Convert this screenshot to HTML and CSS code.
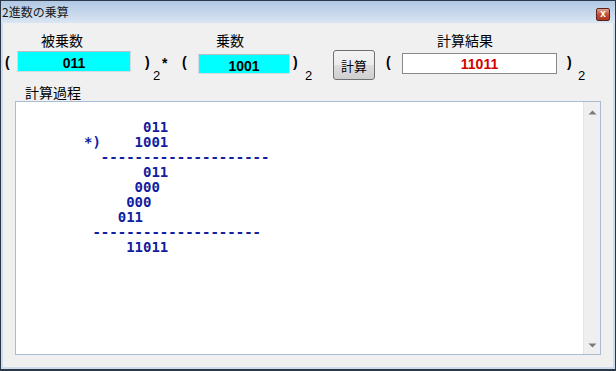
FILE: index.html
```html
<!DOCTYPE html>
<html lang="ja">
<head>
<meta charset="UTF-8">
<title>2進数の乗算</title>
<link rel="stylesheet" href="styles.css">
</head>
<body>
<div class="window">
    <div class="titlebar">
        <span class="title">2進数の乗算</span>
        <span class="close">x</span>
    </div>
    <div class="client">
        <div class="labels">
            <span class="label l1">被乗数</span>
            <span class="label l2">乗数</span>
            <span class="label l3">計算結果</span>
        </div>
        <div class="operands">
            <span class="paren">(</span>
            <div class="field cyan f1">011</div>
            <span class="paren">)</span>
            <span class="sub">2</span>
            <span class="times">*</span>
            <span class="paren">(</span>
            <div class="field cyan f2">1001</div>
            <span class="paren">)</span>
            <span class="sub">2</span>
            <button class="calc">計算</button>
            <span class="paren">(</span>
            <div class="field result">11011</div>
            <span class="paren">)</span>
            <span class="sub">2</span>
        </div>
        <div class="caption">計算過程</div>
        <div class="process">
<pre class="work">       011
*)    1001
  --------------------
       011
      000
     000
    011
 --------------------
     11011</pre>
            <div class="scrollbar">
                <svg width="9" height="5" viewBox="0 0 9 5"><polygon points="0.5,4.5 4.5,0.5 8.5,4.5" fill="#7a7a7a"/></svg>
                <svg width="9" height="5" viewBox="0 0 9 5"><polygon points="0.5,0.5 8.5,0.5 4.5,4.5" fill="#7a7a7a"/></svg>
            </div>
        </div>
    </div>
</div>
</body>
</html>
```
FILE: styles.css
```css
body, html {
    margin:0; padding:0;
    font-family:"Noto Sans CJK JP", sans-serif;
}
.window {
    width:616px; height:371px; box-sizing:border-box;
    border:1px solid #2b3848; border-bottom-width:2px;
    background:#cddcec;
    display:flex; flex-direction:column;
}
.titlebar {
    height:22px; flex:none;
    display:flex; justify-content:space-between; align-items:flex-start;
    padding:0 5px 0 1px;
    background:linear-gradient(#b1c8e3, #d9e5f2);
}
.title {
    font-size:12px; line-height:22px; color:#1a1a1a;
}
.close {
    width:14px; height:13px; box-sizing:border-box; margin-top:7px;
    border:1px solid #5b2418; border-radius:2px;
    background:linear-gradient(#e2a090, #c4503a 50%, #b0341f);
    color:#fff; font:bold 10px/10px "Liberation Sans", sans-serif; text-align:center;
}
.client {
    flex:1; margin:0 2px 2px; background:#f0f0f0;
}
.labels {
    display:flex; margin-top:9px; height:16px;
    font-size:14px; line-height:16px; color:#000;
}
.l1 { margin-left:38px; }
.l2 { margin-left:133px; }
.l3 { margin-left:193px; }

.operands {
    display:grid; margin-top:2px; height:30px; padding-left:2px;
    grid-template-columns:12px 128px 8px 9px 20px 16px 95px 12px 28px 53px 16px 165px 11px 1fr;
    align-items:start;
    font-family:"Liberation Sans", sans-serif;
}
.paren {
    margin-top:4px; font-size:14px; font-weight:bold; line-height:16px;
}
.times {
    margin-top:5px; font-size:14px; font-weight:bold; line-height:16px;
}
.sub {
    margin-top:18px; font-size:13px; line-height:16px;
}
.field {
    box-sizing:border-box; padding-top:3px; line-height:16px;
    font-size:14px; font-weight:bold; text-align:center;
}
.cyan {
    background:#00ffff; color:#000;
    border:1px solid #d3dbe3; border-top-color:#b8bfc7;
}
.f1 { width:114px; height:21px; margin-top:1px; }
.f2 { width:92px; height:20px; margin-top:4px; }
.result {
    width:155px; height:21px; margin-top:3px; padding-top:2px;
    background:#fff; color:#d40000; border:1px solid #8a8a8a;
}
.calc {
    width:42px; height:30px; padding:0;
    border:1px solid #707070; border-radius:3px;
    background:linear-gradient(#f4f4f4, #ebebeb 50%, #dddddd 50%, #cfcfcf);
    font:13px "Noto Sans CJK JP", sans-serif; color:#000;
}
.caption {
    margin:4px 0 0 22px; font-size:14px; line-height:16px;
}
.process {
    margin:1px 0 0 12px; width:586px; height:254px; box-sizing:border-box;
    border:1px solid #a9bdd3; background:#fff;
    display:flex;
}
.work {
    flex:1; margin:0; padding:18px 0 0 68px;
    font:bold 14px/15px "DejaVu Sans Mono", monospace;
    color:#1020a0;
}
.scrollbar {
    width:17px; background:#efefef; border-left:1px solid #e4e4e4; box-sizing:border-box;
    display:flex; flex-direction:column; justify-content:space-between; align-items:center;
    padding:8px 0 6px;
}
```
